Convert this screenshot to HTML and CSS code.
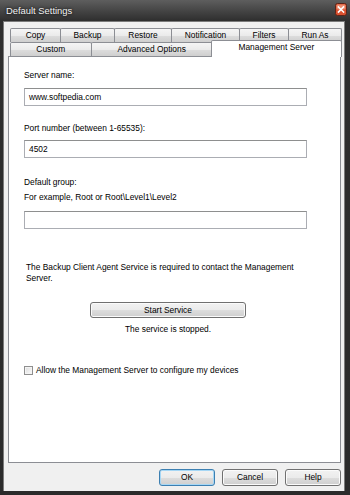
FILE: index.html
```html
<!DOCTYPE html>
<html lang="en">
<head>
  <meta charset="UTF-8">
  <title>Default Settings</title>
  <link rel="stylesheet" href="styles.css">
</head>
<body>
  <div class="window">
    <div class="titlebar">
      <span class="title">Default Settings</span>
      <svg class="close" width="12" height="13" viewBox="0 0 12 13">
        <rect x="0.5" y="0.5" width="11" height="12" rx="2" fill="#d9502f" stroke="#5c2418"/>
        <rect x="1.5" y="1.5" width="9" height="5" rx="1" fill="#ec8a6c"/>
        <path d="M3.5 4 L8.5 9 M8.5 4 L3.5 9" stroke="#fff" stroke-width="1.6" stroke-linecap="square"/>
      </svg>
    </div>

    <div class="client">
      <div class="tabs">
        <div class="tab-row">
          <div class="tab t-copy">Copy</div>
          <div class="tab t-backup">Backup</div>
          <div class="tab t-restore">Restore</div>
          <div class="tab t-notify">Notification</div>
          <div class="tab t-filters">Filters</div>
          <div class="tab t-runas">Run As</div>
        </div>
        <div class="tab-row">
          <div class="tab t-custom">Custom</div>
          <div class="tab t-advanced">Advanced Options</div>
          <div class="tab t-mgmt selected">Management Server</div>
        </div>
      </div>

      <div class="panel">
        <div class="label first">Server name:</div>
        <div class="field f-server">www.softpedia.com</div>

        <div class="label port">Port number (between 1-65535):</div>
        <div class="field f-port">4502</div>

        <div class="label group">Default group:</div>
        <div class="label example">For example, Root or Root\Level1\Level2</div>
        <div class="field f-group"></div>

        <p class="note">The Backup Client Agent Service is required to contact the Management Server.</p>

        <div class="service">
          <div class="btn btn-start">Start Service</div>
          <div class="status">The service is stopped.</div>
        </div>

        <label class="check">
          <span class="box"></span>
          <span>Allow the Management Server to configure my devices</span>
        </label>
      </div>

      <div class="actions">
        <div class="btn btn-default">OK</div>
        <div class="btn">Cancel</div>
        <div class="btn">Help</div>
      </div>
    </div>
  </div>
</body>
</html>
```

FILE: styles.css
```css
body {
  margin: 0;
  font-family: "Liberation Sans", Arial, sans-serif;
  font-size: 8.4px;
  color: #000;
}
.window {
  width: 350px;
  height: 495px;
  box-sizing: border-box;
  display: flex;
  flex-direction: column;
  padding: 0 5px 4px 3px;
  background: linear-gradient(#5e5e5e, #424242 12px, #2e2e2e 21px, #2b2b2b);
}
.titlebar {
  height: 21px;
  display: flex;
  align-items: center;
  justify-content: space-between;
  padding: 0 0 1px 3px;
  box-sizing: border-box;
}
.title {
  color: #f2f2f2;
  font-size: 9.4px;
  text-shadow: 0 0 3px #000;
}
.close {
  display: block;
  margin: -1px -2px 0 0;
}
.client {
  flex: 1;
  display: flex;
  flex-direction: column;
  background: #f0f0f0;
  padding: 6px 3px 0 4px;
  border: 1px solid #7b7b7b;
  border-bottom: none;
}
.tab-row {
  display: flex;
  padding-left: 2px;
}
.tab {
  height: 14px;
  box-sizing: border-box;
  margin-right: -1px;
  border: 1px solid #8c8e94;
  border-bottom: none;
  border-radius: 2px 2px 0 0;
  background: linear-gradient(#f5f5f5, #ebebeb 50%, #dddddd 51%, #cfcfcf);
  text-align: center;
  line-height: 13px;
}
.t-copy { width: 51px; }
.t-backup { width: 55px; }
.t-restore { width: 58px; }
.t-notify { width: 69px; }
.t-filters { width: 50px; }
.t-runas { width: 54px; }
.t-custom { width: 82px; }
.t-advanced { width: 123px; }
.tab.selected {
  position: relative;
  z-index: 1;
  width: 132px;
  height: 17px;
  margin: -2px -1px -1px -1px;
  background: #fff;
  border-color: #8c8e94;
  line-height: 13px;
}
.panel {
  flex: 1;
  background: #fff;
  border: 1px solid #8c8e94;
  padding: 12px 0 0 15px;
  line-height: 12px;
}
.label.port { margin-top: 16px; }
.label.group { margin-top: 18px; }
.label.example { margin-top: 3px; }
.field {
  width: 283px;
  height: 18px;
  box-sizing: border-box;
  margin-top: 7px;
  border: 1px solid #abadb3;
  border-top-color: #8e8f8f;
  background: #fff;
  padding: 0 4px;
  line-height: 16px;
}
.f-port { margin-top: 6px; }
.f-group { margin-top: 8px; }
.note {
  width: 285px;
  margin: 33px 0 0 2px;
  line-height: 10.5px;
}
.service {
  display: flex;
  flex-direction: column;
  align-items: center;
  width: 288px;
  margin-top: 19px;
}
.btn {
  width: 56px;
  height: 17px;
  box-sizing: border-box;
  border: 1px solid #707070;
  border-radius: 3px;
  background: linear-gradient(#f2f2f2, #ebebeb 50%, #dddddd 51%, #cfcfcf);
  text-align: center;
  line-height: 15px;
  box-shadow: inset 0 0 0 1px #fbfbfb;
}
.btn-start {
  width: 156px;
  height: 16px;
  line-height: 14px;
}
.status {
  margin-top: 5px;
}
.check {
  display: flex;
  align-items: center;
  gap: 3px;
  margin-top: 29px;
}
.box {
  width: 9px;
  height: 9px;
  box-sizing: border-box;
  border: 1px solid #8f8f8f;
  background: linear-gradient(135deg, #dcdcdc, #fbfbfb);
  box-shadow: inset 0 0 0 1px #f4f4f4;
}
.actions {
  height: 28px;
  box-sizing: border-box;
  padding-top: 6px;
  display: flex;
  justify-content: flex-end;
  gap: 7px;
}
.btn-default {
  border-color: #3c7fb1;
  box-shadow: inset 0 0 0 1px #a6d7f5;
}
```
